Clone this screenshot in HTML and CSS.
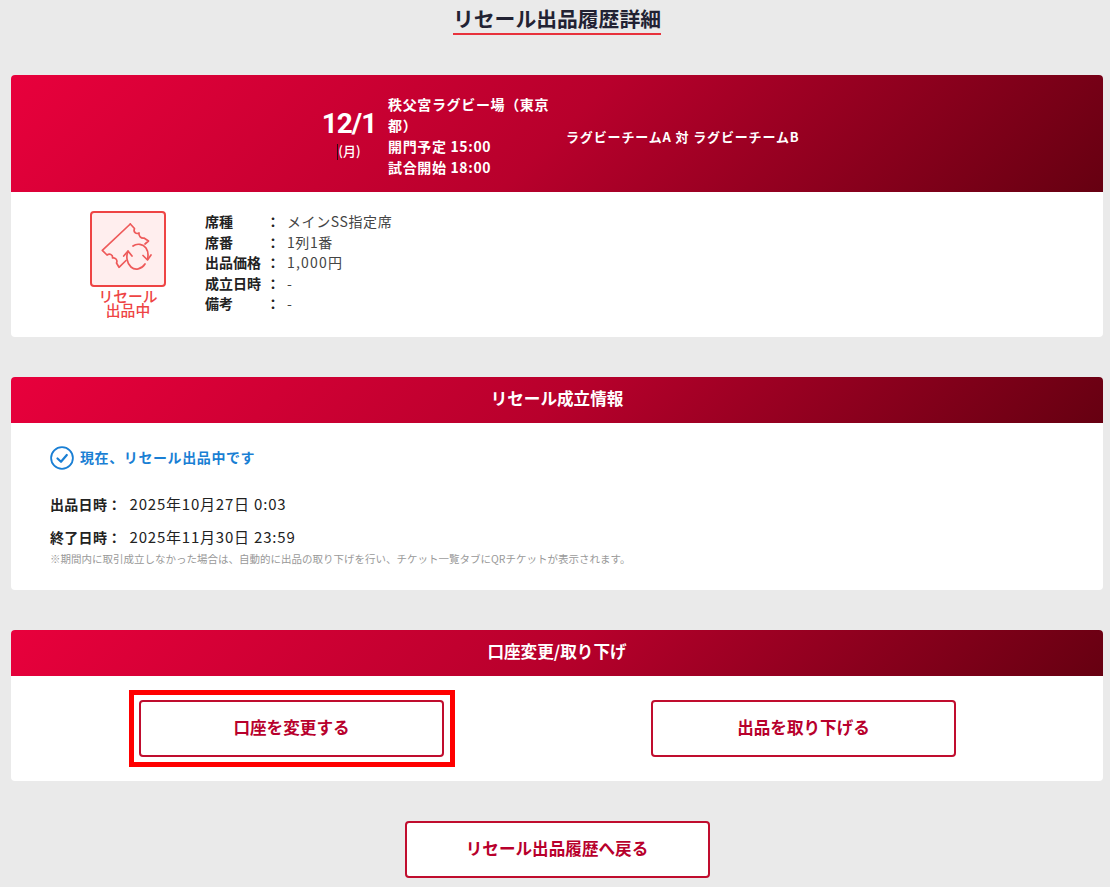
FILE: index.html
```html
<!DOCTYPE html>
<html lang="ja">
<head>
    <meta charset="UTF-8">
    <meta name="viewport" content="width=device-width, initial-scale=1.0">
    <title>リセール出品履歴詳細</title>
    <link rel="stylesheet" href="styles.css">
</head>
<body>

<div class="page-title-wrap">
    <h1 class="page-title">リセール出品履歴詳細</h1>
</div>

<section class="card">
    <div class="event-head">
        <div class="event-date">
            <div class="event-day">12/1</div>
            <div class="event-week"><span class="caret"></span>(月)</div>
        </div>
        <div class="event-place">
            <p>秩父宮ラグビー場（東京都）</p>
            <p>開門予定 15:00</p>
            <p>試合開始 18:00</p>
        </div>
        <div class="event-teams">ラグビーチームA 対 ラグビーチームB</div>
    </div>
    <div class="ticket-body">
        <div class="status">
            <div class="status-box">
                <svg class="status-icon" viewBox="0 0 72 72" fill="none" stroke="#ee5a5a" stroke-width="1.7" stroke-linejoin="round" stroke-linecap="round">
                    <path d="M38.3 11 L42.5 15.5 C41 19 44 21.5 47 20 C46.5 23 49 25.5 52 25 L56.5 28 L53 31"/>
                    <path d="M38.3 11 L10.3 37.3 L15 42 C18 40 21 42 20.5 45 C23 44 26 47 24.5 50 L27 54.3 L34 47.5"/>
                    <path d="M36 38.5 C34 43 34.5 50 39 54 C43 57.5 49.5 56.5 53 51"/>
                    <path d="M31.7 43 L36 38 L40 43"/>
                    <path d="M41 33 C45 30 51 31 54 35 C56 38 56.5 42 55.5 46"/>
                    <path d="M51 42.5 L55.5 47 L59 42"/>
                </svg>
            </div>
            <div class="status-label">リセール<br>出品中</div>
        </div>
        <dl class="ticket-info">
            <div class="info-row"><dt>席種</dt><dd>メインSS指定席</dd></div>
            <div class="info-row"><dt>席番</dt><dd>1列1番</dd></div>
            <div class="info-row"><dt>出品価格</dt><dd class="info-price">1,000円</dd></div>
            <div class="info-row"><dt>成立日時</dt><dd>-</dd></div>
            <div class="info-row"><dt>備考</dt><dd>-</dd></div>
        </dl>
    </div>
</section>

<section class="card">
    <h2 class="card-head">リセール成立情報</h2>
    <div class="resale-body">
        <div class="notice">
            <svg class="notice-icon" viewBox="0 0 24 24" fill="none" stroke="#1a7fd4" stroke-linecap="round" stroke-linejoin="round">
                <circle cx="12" cy="12" r="10.9" stroke-width="1.8"/>
                <path d="M7.5 12.5 L11 15.8 L16.8 9" stroke-width="2.2"/>
            </svg>
            <span class="notice-text">現在、リセール出品中です</span>
        </div>
        <p class="date-line"><b>出品日時：</b><span class="date-value">2025年10月27日 0:03</span></p>
        <p class="date-line"><b>終了日時：</b><span class="date-value">2025年11月30日 23:59</span></p>
        <p class="note">※期間内に取引成立しなかった場合は、自動的に出品の取り下げを行い、チケット一覧タブにQRチケットが表示されます。</p>
    </div>
</section>

<section class="card">
    <h2 class="card-head">口座変更/取り下げ</h2>
    <div class="action-body">
        <a class="btn btn-marked" href="#">口座を変更する</a>
        <a class="btn" href="#">出品を取り下げる</a>
    </div>
</section>

<div class="back-wrap">
    <a class="btn" href="#">リセール出品履歴へ戻る</a>
</div>

</body>
</html>
```

FILE: styles.css
```css
body {
    margin: 0;
    padding: 0 7px 0 11px;
    background-color: #eaeaea;
    color: #222222;
    font-family: "Noto Sans CJK JP", "Noto Sans", sans-serif;
    font-size: 14px;
}
p {
    margin: 0;
}
.page-title-wrap {
    text-align: center;
    height: 75px;
}
.page-title {
    display: inline-block;
    margin: 4px 0 0;
    padding-bottom: 1px;
    border-bottom: 2px solid #e8323c;
    color: #222233;
    font-size: 20.8px;
    line-height: 28px;
    font-weight: 700;
}
.card {
    margin-bottom: 40px;
    background-color: #ffffff;
    border-radius: 4px;
    overflow: hidden;
}
.event-head {
    display: flex;
    align-items: center;
    height: 117px;
    padding: 7px 0 0 310px;
    box-sizing: border-box;
    background: linear-gradient(135deg, #e8003c 0%, #b8002c 50%, #660011 100%);
    color: #ffffff;
}
.event-date {
    width: 56px;
    margin-top: 2px;
    text-align: center;
}
.event-day {
    font-family: Roboto, sans-serif;
    font-size: 28px;
    line-height: 32px;
    font-weight: 700;
    letter-spacing: -1px;
}
.event-week {
    font-size: 13px;
    line-height: 22px;
    font-weight: 500;
    margin-bottom: 6px;
}
.caret {
    display: inline-block;
    height: 16px;
    border-left: 1px solid #2a0a14;
    vertical-align: middle;
}
.event-place {
    width: 165px;
    margin: 0 0 3px 11px;
    font-size: 14px;
    line-height: 21px;
    font-weight: 700;
    letter-spacing: 0.65px;
}
.event-teams {
    margin: 0 0 2px 13px;
    font-size: 13px;
    font-weight: 700;
    letter-spacing: 0.85px;
}
.ticket-body {
    display: flex;
    height: 145px;
    box-sizing: border-box;
    padding: 19px 0 0 79px;
}
.status {
    width: 76px;
}
.status-box {
    width: 76px;
    height: 76px;
    box-sizing: border-box;
    border: 2px solid #ee4444;
    border-radius: 4px;
    background-color: #ffeeee;
}
.status-icon {
    display: block;
    width: 72px;
    height: 72px;
}
.status-label {
    margin-top: 2px;
    color: #ee4444;
    font-size: 14.8px;
    line-height: 14px;
    text-align: center;
    font-weight: 500;
    white-space: nowrap;
}
.ticket-info {
    margin: 0 0 0 39px;
    line-height: 20.6px;
}
.info-row {
    display: flex;
}
.info-row dt {
    position: relative;
    width: 82px;
    font-weight: 700;
}
.info-row dt::after {
    content: "：";
    position: absolute;
    left: 61px;
}
.info-row dd {
    margin: 0;
    color: #444444;
    letter-spacing: 0.6px;
}
.info-row .info-price {
    letter-spacing: 1.2px;
}
.card-head {
    margin: 0;
    height: 46px;
    background: linear-gradient(135deg, #e8003c 0%, #b8002c 50%, #660011 100%);
    color: #ffffff;
    font-size: 16.6px;
    line-height: 43px;
    font-weight: 700;
    text-align: center;
}
.resale-body {
    height: 167px;
    box-sizing: border-box;
    padding: 23px 0 0 39px;
}
.notice {
    display: flex;
    align-items: center;
    gap: 6px;
    color: #1a7fd4;
    font-weight: 700;
    line-height: 20px;
    margin-bottom: 24px;
}
.notice-icon {
    width: 24px;
    height: 24px;
}
.notice-text {
    margin-bottom: 3px;
    letter-spacing: 0.6px;
}
.date-line {
    line-height: 20px;
    margin-bottom: 13px;
    letter-spacing: 0.3px;
}
.date-value {
    margin-left: 8px;
    font-size: 15px;
    letter-spacing: 0.8px;
}
.note {
    margin-top: -8px;
    color: #999999;
    font-size: 10.5px;
    line-height: 14px;
}
.action-body {
    display: flex;
    gap: 207px;
    height: 105px;
    box-sizing: border-box;
    padding: 24px 0 0 128px;
}
.btn {
    display: flex;
    align-items: center;
    justify-content: center;
    width: 305px;
    height: 57px;
    box-sizing: border-box;
    padding-bottom: 3px;
    border: 2px solid #c00d2e;
    border-radius: 4px;
    background-color: #ffffff;
    color: #b8002c;
    font-size: 16.6px;
    font-weight: 700;
    text-decoration: none;
}
.btn-marked {
    position: relative;
}
.btn-marked::before {
    content: "";
    position: absolute;
    inset: -12px -13px -12px -12px;
    border: 5px solid #ff0000;
}
.back-wrap {
    display: flex;
    justify-content: center;
    height: 65px;
}
```
